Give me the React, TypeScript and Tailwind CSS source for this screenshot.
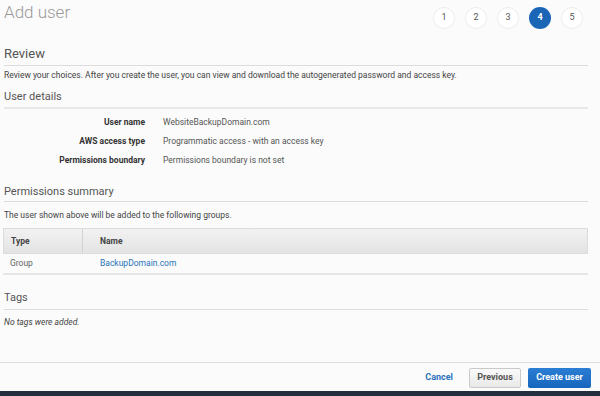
import React from 'react'

const steps = [1, 2, 3, 4, 5]

const details = [
  { label: 'User name', value: 'WebsiteBackupDomain.com' },
  { label: 'AWS access type', value: 'Programmatic access - with an access key' },
  { label: 'Permissions boundary', value: 'Permissions boundary is not set' },
]

function SubTitle({ children, className = '' }: { children: React.ReactNode; className?: string }) {
  return <h3 className={`text-[11px] leading-[14px] text-[#555] border-b border-[#dcdcdc] ${className}`}>{children}</h3>
}

export default function App() {
  return (
    <div
      className="w-[600px] h-[396px] flex flex-col bg-[#fbfbfb] overflow-hidden"
      style={{ fontFamily: 'Roboto, "Liberation Sans", sans-serif' }}
    >
      <div className="flex-1 pl-[4px] pr-[12px]">
        {/* header */}
        <div className="flex justify-between items-start">
          <h1 className="text-[17px] leading-[22px] font-light text-[#9a9a9a] mt-[1px]">Add user</h1>
          <div className="flex gap-[10px] mt-[7px] mr-[5px]">
            {steps.map((s) =>
              s === 4 ? (
                <div
                  key={s}
                  className="w-[22px] h-[22px] rounded-full bg-[#1b65b7] text-white text-[9px] font-bold flex items-center justify-center"
                >
                  {s}
                </div>
              ) : (
                <div
                  key={s}
                  className="w-[22px] h-[22px] rounded-full bg-white border border-[#ececec] text-[#555] text-[9px] flex items-center justify-center"
                >
                  {s}
                </div>
              ),
            )}
          </div>
        </div>

        <h2 className="mt-[17px] pb-[3px] text-[13px] leading-[16px] text-[#555] border-b border-[#dcdcdc]">Review</h2>
        <p className="mt-[3px] text-[8.5px] leading-[12px] text-[#444]">
          Review your choices. After you create the user, you can view and download the autogenerated password and
          access key.
        </p>

        <SubTitle className="mt-[9px] pb-[3px] border-b-2 border-[#e8e8e8]">User details</SubTitle>
        <div className="mt-[4px] flex flex-col">
          {details.map((d) => (
            <div key={d.label} className="h-[19px] flex items-center text-[8.5px]">
              <div className="w-[141px] text-right font-bold text-[#333]">{d.label}</div>
              <div className="ml-[18px] text-[#555]">{d.value}</div>
            </div>
          ))}
        </div>

        <SubTitle className="mt-[15px] pb-[2px]">Permissions summary</SubTitle>
        <p className="mt-[7px] text-[8.5px] leading-[12px] text-[#444]">
          The user shown above will be added to the following groups.
        </p>

        <div className="mt-[7px] -ml-[1px] text-[8.5px]">
          <div className="h-[26px] flex bg-gradient-to-b from-[#f2f2f2] to-[#e3e3e3] border border-[#dcdcdc] font-bold text-[#444]">
            <div className="w-[79px] pl-[7px] flex items-center border-r border-[#d2d2d2]">Type</div>
            <div className="pl-[17px] flex items-center">Name</div>
          </div>
          <div className="h-[21px] flex border-b-2 border-[#e6e6e6]">
            <div className="w-[79px] pl-[7px] flex items-center text-[#666]">Group</div>
            <div className="pl-[18px] flex items-center text-[#2773b8]">BackupDomain.com</div>
          </div>
        </div>

        <SubTitle className="mt-[16px] pb-[4px]">Tags</SubTitle>
        <p className="mt-[6px] text-[8.5px] leading-[12px] italic text-[#444]">No tags were added.</p>
      </div>

      {/* footer */}
      <div className="border-t border-[#dcdcdc]">
        <div className="h-[28px] flex items-center justify-end gap-[17px] pr-[9px] pt-[1px] text-[9px] font-bold">
          <span className="text-[#2a73bd] mr-[-1px]">Cancel</span>
          <div className="flex gap-[7px]">
            <button className="w-[52px] h-[20px] rounded-[2px] border border-[#c9c9c9] bg-gradient-to-b from-[#fafafa] to-[#e9e9e9] text-[#555]">
              Previous
            </button>
            <button className="w-[63px] h-[20px] rounded-[2px] bg-gradient-to-b from-[#2a7ed3] to-[#1766bd] text-white">
              Create user
            </button>
          </div>
        </div>
        <div className="h-[5px] bg-[#232f3e]" />
      </div>
    </div>
  )
}
